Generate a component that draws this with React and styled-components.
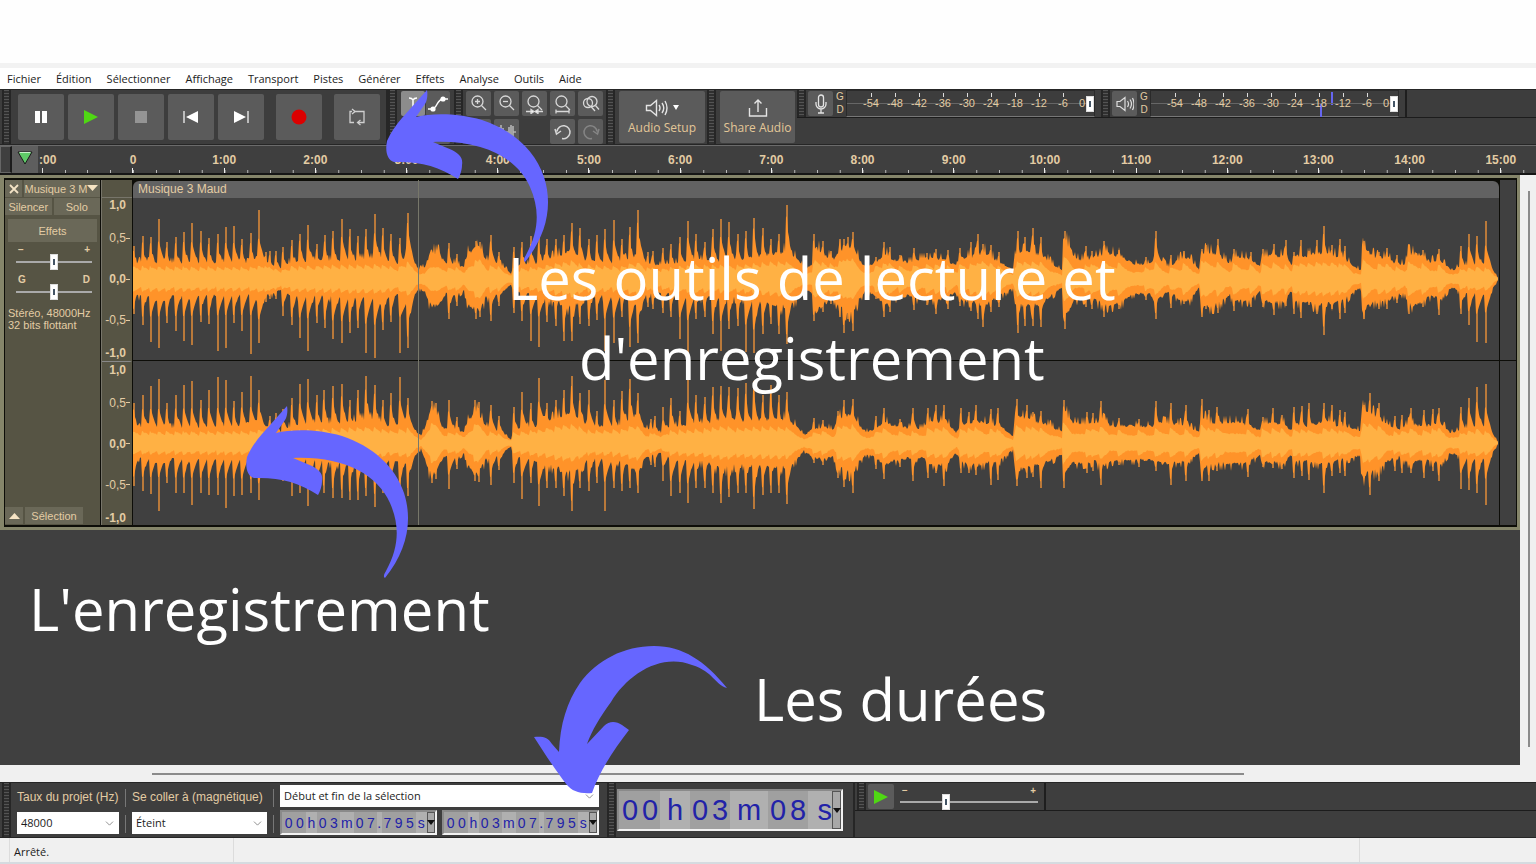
import React, { useState } from 'react';
import styled, { createGlobalStyle, css } from 'styled-components';
import { ChevronDown } from 'lucide-react';

const menus = ['Fichier', 'Édition', 'Sélectionner', 'Affichage', 'Transport', 'Pistes', 'Générer', 'Effets', 'Analyse', 'Outils', 'Aide'];
const minutes = Array.from({ length: 16 }, (_, i) => (i === 0 ? '0' : `${i}:00`));
const levels = ['-54', '-48', '-42', '-36', '-30', '-24', '-18', '-12', '-6'];
const scale = ['1,0', '0,5', '0,0', '-0,5', '-1,0'];

// peaks: x, height above the axis, height below the axis
const leftPeaks = [
    [133, 33, 35], [142, 43, 46], [150, 42, 63], [158, 60, 69], [166, 37, 44], [175, 42, 52], [183, 47, 62], [191, 56, 66],
    [200, 48, 43], [208, 41, 45], [217, 45, 72], [225, 52, 69], [233, 53, 44], [241, 40, 52], [250, 46, 75], [258, 69, 64],
    [265, 27, 23], [269, 28, 20], [275, 28, 20], [282, 32, 37], [291, 39, 46], [299, 45, 59], [307, 54, 72], [316, 35, 44],
    [324, 44, 49], [332, 48, 60], [341, 60, 64], [349, 50, 54], [357, 43, 49], [365, 50, 74], [374, 65, 79], [382, 51, 51],
    [390, 45, 43], [399, 41, 74], [407, 66, 69], [448, 36, 40], [456, 25, 27], [475, 38, 40], [479, 37, 38], [490, 44, 42],
    [498, 27, 27], [513, 32, 34], [521, 37, 42], [530, 43, 62], [538, 42, 68], [546, 40, 43], [555, 40, 47], [563, 44, 62],
    [571, 56, 62], [579, 51, 45], [588, 40, 47], [596, 44, 41], [604, 50, 72], [613, 59, 64], [621, 40, 38], [629, 52, 68],
    [637, 69, 64], [647, 27, 28], [652, 28, 30], [662, 31, 34], [670, 35, 38], [679, 42, 60], [687, 58, 75], [695, 45, 40],
    [704, 37, 38], [712, 50, 55], [720, 60, 72], [728, 57, 50], [737, 45, 47], [745, 48, 73], [753, 61, 74], [762, 51, 55],
    [770, 40, 45], [778, 45, 55], [786, 74, 65], [813, 45, 42], [822, 38, 33], [830, 28, 25], [839, 40, 38], [843, 40, 54],
    [847, 42, 40], [852, 47, 52], [875, 22, 20], [883, 37, 38], [889, 32, 33], [899, 24, 20], [913, 31, 31], [926, 26, 26],
    [935, 30, 35], [947, 29, 30], [959, 31, 27], [970, 37, 32], [977, 45, 40], [982, 35, 48], [990, 34, 33], [998, 27, 28],
    [1017, 48, 54], [1024, 42, 47], [1032, 51, 47], [1040, 42, 48], [1064, 48, 50], [1085, 33, 28], [1091, 28, 30],
    [1103, 38, 38], [1118, 29, 30], [1145, 22, 21], [1155, 48, 40], [1170, 24, 29], [1183, 28, 25], [1201, 30, 38],
    [1205, 34, 30], [1217, 40, 34], [1233, 30, 32], [1250, 27, 28], [1262, 30, 28], [1273, 35, 36], [1285, 39, 27],
    [1293, 27, 35], [1300, 39, 39], [1308, 28, 26], [1316, 39, 35], [1323, 53, 56], [1331, 34, 30], [1339, 40, 40],
    [1344, 33, 34], [1363, 38, 40], [1378, 27, 30], [1386, 31, 30], [1396, 24, 24], [1408, 35, 35], [1422, 29, 28],
    [1438, 30, 36], [1460, 33, 35], [1468, 45, 46], [1476, 43, 63], [1485, 58, 64],
];

const rightPeaks = [
    [133, 40, 43], [142, 48, 48], [150, 57, 51], [158, 64, 68], [166, 40, 40], [175, 48, 50], [183, 58, 50], [191, 62, 62],
    [200, 43, 50], [208, 53, 52], [217, 66, 52], [225, 63, 65], [233, 42, 53], [241, 51, 52], [250, 67, 50], [258, 53, 57],
    [269, 27, 24], [275, 30, 25], [282, 34, 38], [291, 45, 53], [299, 59, 50], [307, 64, 63], [316, 48, 50], [323, 53, 50],
    [332, 57, 55], [341, 59, 55], [349, 43, 57], [357, 53, 57], [365, 67, 53], [374, 58, 64], [382, 43, 50], [390, 50, 45],
    [399, 66, 53], [407, 45, 53], [431, 42, 40], [435, 40, 36], [448, 43, 46], [456, 26, 26], [474, 43, 38], [478, 41, 39],
    [490, 38, 42], [498, 27, 27], [513, 36, 40], [521, 51, 56], [530, 40, 40], [538, 65, 63], [546, 40, 45], [555, 43, 45],
    [563, 53, 53], [571, 67, 68], [579, 50, 45], [588, 53, 48], [596, 32, 40], [604, 63, 68], [613, 43, 45], [621, 52, 48],
    [629, 64, 45], [637, 50, 50], [650, 24, 22], [654, 27, 24], [662, 36, 38], [670, 45, 53], [679, 32, 50], [687, 64, 60],
    [695, 48, 45], [704, 46, 45], [712, 56, 50], [720, 57, 60], [728, 56, 54], [737, 55, 50], [745, 60, 50], [753, 62, 66],
    [762, 48, 52], [770, 58, 50], [778, 48, 50], [786, 51, 61], [813, 25, 20], [822, 23, 22], [837, 32, 35], [843, 43, 44],
    [852, 44, 50], [875, 27, 26], [883, 35, 36], [899, 24, 24], [912, 35, 38], [927, 35, 35], [935, 38, 30], [943, 38, 43],
    [960, 35, 30], [968, 31, 30], [975, 38, 32], [990, 34, 42], [997, 35, 37], [1016, 44, 43], [1026, 38, 35], [1032, 31, 34],
    [1040, 32, 45], [1063, 43, 45], [1086, 31, 30], [1092, 30, 28], [1100, 42, 42], [1118, 25, 22], [1138, 24, 24],
    [1155, 42, 28], [1170, 40, 42], [1185, 38, 38], [1201, 44, 38], [1208, 33, 38], [1216, 36, 28], [1247, 34, 34],
    [1262, 26, 24], [1272, 35, 25], [1281, 28, 26], [1293, 36, 35], [1301, 37, 33], [1308, 40, 37], [1323, 40, 50],
    [1331, 38, 33], [1339, 33, 30], [1344, 31, 33], [1363, 38, 35], [1369, 50, 52], [1378, 40, 38], [1394, 27, 28],
    [1401, 28, 30], [1410, 35, 30], [1423, 33, 35], [1432, 34, 28], [1438, 35, 38], [1460, 36, 46], [1468, 45, 47],
    [1476, 56, 50], [1485, 59, 62],
];

// body: x, half height of the dense part of the sound
const leftBody = [
    [133, 18], [250, 17], [262, 20], [281, 12], [290, 18], [340, 20], [380, 22], [398, 16], [408, 28], [417, 14], [419, 10],
    [425, 14], [431, 30], [439, 28], [446, 16], [456, 17], [464, 12], [468, 28], [480, 34], [486, 20], [498, 18], [511, 6],
    [513, 14], [540, 18], [565, 28], [573, 32], [583, 20], [620, 18], [640, 28], [647, 16], [662, 15], [690, 20], [740, 20],
    [760, 26], [786, 30], [797, 22], [805, 11], [812, 15], [815, 36], [825, 26], [834, 22], [840, 32], [853, 36], [859, 22],
    [866, 12], [872, 16], [886, 27], [895, 20], [910, 18], [920, 22], [940, 22], [957, 15], [960, 23], [970, 24], [985, 29],
    [1000, 18], [1013, 10], [1015, 29], [1040, 28], [1052, 17], [1062, 9], [1063, 42], [1068, 38], [1075, 22], [1088, 20],
    [1105, 28], [1120, 26], [1133, 16], [1150, 16], [1155, 26], [1168, 13], [1183, 24], [1190, 22], [1199, 10], [1201, 30],
    [1217, 28], [1230, 17], [1234, 25], [1250, 22], [1260, 14], [1262, 24], [1275, 26], [1285, 24], [1291, 13], [1295, 24],
    [1320, 28], [1335, 26], [1345, 22], [1354, 13], [1361, 10], [1362, 35], [1375, 24], [1388, 23], [1395, 17], [1405, 16],
    [1408, 28], [1417, 28], [1430, 19], [1440, 20], [1452, 9], [1460, 14], [1480, 17], [1490, 15], [1498, 1],
];

const rightBody = [
    [133, 16], [250, 17], [262, 20], [281, 12], [290, 18], [340, 22], [370, 26], [390, 18], [408, 22], [417, 12], [421, 6],
    [425, 18], [432, 38], [438, 26], [444, 15], [456, 15], [464, 11], [468, 24], [477, 34], [486, 18], [498, 13], [511, 4],
    [513, 14], [540, 20], [563, 30], [573, 32], [590, 17], [620, 20], [636, 30], [645, 16], [662, 10], [670, 18], [700, 20],
    [725, 28], [740, 22], [755, 26], [786, 26], [797, 18], [804, 8], [812, 15], [826, 18], [833, 14], [838, 27], [852, 32],
    [859, 20], [866, 12], [875, 15], [884, 23], [900, 17], [923, 16], [928, 22], [946, 24], [957, 10], [960, 20], [975, 24],
    [1000, 19], [1013, 7], [1015, 30], [1035, 24], [1050, 19], [1062, 12], [1063, 38], [1072, 22], [1095, 20], [1102, 26],
    [1110, 19], [1150, 18], [1160, 22], [1185, 20], [1199, 12], [1201, 31], [1210, 22], [1240, 23], [1260, 14], [1262, 21],
    [1283, 22], [1291, 13], [1294, 20], [1310, 19], [1325, 24], [1340, 18], [1360, 14], [1362, 36], [1379, 28], [1388, 19],
    [1398, 14], [1410, 22], [1422, 18], [1440, 22], [1450, 11], [1460, 14], [1478, 20], [1490, 15], [1498, 1],
];

const START = 133;
const WIDTH = 1366;

const interpolate = (points, x) => {
    const i = points.findIndex(p => p[0] >= x);
    if (i <= 0) return points[i === 0 ? 0 : points.length - 1][1];
    const [x0, y0] = points[i - 1];
    const [x1, y1] = points[i];
    return y0 + ((y1 - y0) * (x - x0)) / (x1 - x0);
};

const noise = n => {
    const v = Math.sin(n * 12.9898) * 43758.5453;
    return v - Math.floor(v);
};

const buildWave = (body, peaks, center) => {
    const edge = (side, inner) => {
        const points = [];
        for (let i = 0; i < WIDTH; i++) {
            const x = START + i;
            const last = peaks.filter(p => p[0] <= x).pop();
            const base = interpolate(body, x);
            const age = last ? x - last[0] : 20;
            let h;
            if (inner) {
                h = base * 0.38 + Math.min(6, base * 0.3) * Math.max(0, 1 - age / 9) + noise(x * side) * 1.5;
            } else {
                const grain = noise(x * side + 7);
                h = base * (0.84 + grain * 0.2 + (grain > 0.82 ? 0.2 : 0));
                if (last) {
                    const hit = last[side] * (age < 2 ? 0.85 : 0.64 + grain * 0.12);
                    h = Math.max(h, Math.min(base * 2.1, hit) * Math.exp(-Math.max(0, age - 1) / 8));
                }
            }
            points.push(Math.max(1, h));
        }
        return points;
    };
    const shape = (up, down) =>
        'M0 ' + center +
        up.map((h, i) => `L${i} ${(center - h).toFixed(1)}`).join('') +
        down.map((h, i) => `L${i} ${(center + h).toFixed(1)}`).reverse().join('') + 'Z';
    return {
        outer: shape(edge(1), edge(2)),
        inner: shape(edge(1, true), edge(2, true)),
        spikes: peaks.map(([x, up, down]) => `M${x - START + 1} ${center - up}V${center + down}`).join(''),
    };
};

const channels = [
    { name: 'gauche', height: 162, wave: buildWave(leftBody, leftPeaks, 81) },
    { name: 'droite', height: 164, wave: buildWave(rightBody, rightPeaks, 82) },
];

const curve = 'M41 1C42 6 41 12 39 15L30 28C46 24 72 24 96 31C126 41 149 61 158 88C167 116 161 146 139 173C137 172 138 169 140 166C153 142 154 121 144 98C131 69 97 51 47 53L66 61C75 66 77 70 76 76C76 81 74 87 72 90C53 77 32 72 8 73C1 71 -1 62 1 52C5 43 10 36 16 29Z';
const hook = 'M193 43C180 39 180 27 158 20C127 8 94 29 77 57C66 72 58 85 53 99L70 81C75 76 82 76 88 80L95 85C81 103 66 125 58 148C46 149 38 146 33 140C22 126 13 112 0 92C8 91 14 92 18 99L25 107C26 79 33 57 46 38C63 15 90 1 120 1C149 1 171 16 193 43Z';

const App = () => {
    const [pan, setPan] = useState(50);
    const [gain, setGain] = useState(50);
    const [speed, setSpeed] = useState(32);

    return (
        <Page>
            <GlobalStyle />
            <TitleArea />
            <MenuBar>
                {menus.map(m => <MenuItem key={m}>{m}</MenuItem>)}
            </MenuBar>

            <TopDock>
                <Grip $first />
                <Transport>
                    <BigButton aria-label='Pause'><svg width='14' height='14'><path d='M1 1h5v12H1zM8 1h5v12H8z' fill='#fff' /></svg></BigButton>
                    <BigButton aria-label='Lecture'><svg width='16' height='16'><path d='M1 1l14 7-14 7z' fill='#4fd813' /></svg></BigButton>
                    <BigButton aria-label='Arrêter'><svg width='14' height='14'><path d='M1 1h12v12H1z' fill='#949494' /></svg></BigButton>
                    <BigButton aria-label='Aller au début'><svg width='16' height='14'><path d='M1 1v12' stroke='#ddd' strokeWidth='1.5' /><path d='M15 1v12L3 7z' fill='#fff' /></svg></BigButton>
                    <BigButton aria-label='Aller à la fin'><svg width='16' height='14'><path d='M15 1v12' stroke='#ddd' strokeWidth='1.5' /><path d='M1 1v12l12-6z' fill='#fff' /></svg></BigButton>
                    <BigButton $apart aria-label='Enregistrer'><svg width='16' height='16'><circle cx='8' cy='8' r='7.5' fill='#dc0000' /></svg></BigButton>
                    <BigButton $apart aria-label='Boucle'>
                        <svg width='18' height='18' fill='none' stroke='#d0d0d0' strokeWidth='1.3'>
                            <path d='M4 3.500H2V14.500H6M6 3.500H16V14.500H10' />
                            <path d='M4 1L7 3.500L4 6M12.500 12L9.500 14.500L12.500 17' />
                        </svg>
                    </BigButton>
                </Transport>
                <Grip />
                <ToolGrid $cols={2} $size={24} $gap={1} $pad={4}>
                    <SmallButton $on aria-label='Outil de sélection'><svg width='20' height='20' stroke='#fff' fill='none' strokeWidth='1.5'><path d='M6 4q3 0 4 2q1-2 4-2M10 6v9M6 17q3 0 4-2q1 2 4 2' /></svg></SmallButton>
                    <SmallButton aria-label='Outil enveloppe'><svg width='22' height='20'><path d='M1 15H5C11 14 9 6 16 5H21' stroke='#fff' strokeWidth='1.5' fill='none' /><circle cx='6' cy='15' r='2.600' fill='#fff' /><circle cx='16' cy='5' r='2.600' fill='#fff' /></svg></SmallButton>
                    <SmallButton aria-label='Outil de dessin' />
                    <SmallButton aria-label='Multi-outils' />
                </ToolGrid>
                <Grip />
                <ToolGrid $cols={5} $size={25} $gap={3} $pad={3}>
                    <SmallButton aria-label='Zoom avant'><Lens><path d='M6 8.500h5M8.500 6v5' /></Lens></SmallButton>
                    <SmallButton aria-label='Zoom arrière'><Lens><path d='M6 8.500h5' /></Lens></SmallButton>
                    <SmallButton aria-label='Zoomer sur la sélection'><Lens><path d='M1 18.500h5M12 18.500h6' /><path d='M6 16.500l3 2-3 2zM13 16.500l-3 2 3 2z' fill='#fff' /></Lens></SmallButton>
                    <SmallButton aria-label='Ajuster à la largeur'><Lens><path d='M3 18.500h13M3 16.500v4M16 16.500v4' /></Lens></SmallButton>
                    <SmallButton aria-label='Bascule de zoom'>
                        <svg width='20' height='20' fill='none' stroke='#d8d8d8' strokeWidth='1.300'>
                            <circle cx='11' cy='7.500' r='5' /><circle cx='7' cy='9' r='4.500' /><path d='M14.500 11.500L18 15.500M10 12.500L14 17' />
                        </svg>
                    </SmallButton>
                    <SmallButton aria-label='Rogner' />
                    <SmallButton aria-label='Silence'><svg width='21' height='16'><path d='M1 8h4M9 8h3M17 8h3' stroke='#ddd' /><path d='M3 3v10M5 1v14M7 4v8M13 3v10M15 1v14M17 2v12' stroke='#bbb' strokeWidth='1.500' /></svg></SmallButton>
                    <Blank />
                    <SmallButton aria-label='Annuler'><Undo /></SmallButton>
                    <SmallButton aria-label='Rétablir'><Undo $flip /></SmallButton>
                </ToolGrid>
                <Grip />
                <LabelButton>
                    <IconLine>
                        <svg width='23' height='20' fill='none' stroke='#e4e4e4' strokeWidth='1.400'><path d='M1.500 7.500h4l6-5v15l-6-5h-4zM14 7q2 3 0 6M17 5q3.500 5 0 10M20 3q4 7 0 14' /></svg>
                        <svg width='7' height='6'><path d='M0 0h6l-3 5z' fill='#fff' /></svg>
                    </IconLine>
                    Audio Setup
                </LabelButton>
                <Grip />
                <LabelButton $narrow>
                    <IconLine><svg width='20' height='20' fill='none' stroke='#e4e4e4' strokeWidth='1.400'><path d='M1.500 10v8h17v-8M10 14V2M6.500 5.500L10 2l3.500 3.500' /></svg></IconLine>
                    Share Audio
                </LabelButton>
                <MeterDock>
                    <Meter label='Niveau d’enregistrement' icon={<svg width='16' height='20' fill='none' stroke='#e4e4e4' strokeWidth='1.300'><rect x='5.500' y='1' width='5' height='12' rx='2.500' /><path d='M3 8v2a5 5 0 0 0 10 0V8M8 15.500V19M5 19h6' /></svg>} />
                    <Meter marks label='Niveau de lecture' icon={<svg width='18' height='18' fill='none' stroke='#ddd' strokeWidth='1.200'><path d='M1 6.500h3l5-4v13l-5-4H1zM11.500 6q2 3 0 6M14 4.500q3 4.500 0 9M16.500 3q3 6 0 12' /></svg>} />
                    <MeterEnd />
                </MeterDock>
            </TopDock>

            <Timeline>
                <TimelineStart />
                <PinButton aria-label='Tête de lecture épinglée'><svg width='16' height='14'><path d='M1 1h14L8 13z' fill='#5fca68' stroke='#1a1a1a' /><path d='M2.500 1.500h11' stroke='#c6f0c8' /></svg></PinButton>
                <HalfMinute>:00</HalfMinute>
                {minutes.map(m => <Minute key={m}>{m}</Minute>)}
            </Timeline>

            <Workspace>
                <Tracks>
                    <Track>
                        <Controls>
                            <Row>
                                <PanelButton $w='17px' aria-label='Fermer la piste'><svg width='10' height='10'><path d='M1 1l8 8M9 1l-8 8' stroke='#f3e3c6' strokeWidth='1.800' /></svg></PanelButton>
                                <PanelButton $grow>Musique 3 M<svg width='12' height='7'><path d='M0 0h11l-5.500 6z' fill='#f6e4c4' /></svg></PanelButton>
                            </Row>
                            <Row>
                                <PanelButton $grow>Silencer</PanelButton>
                                <PanelButton $grow>Solo</PanelButton>
                            </Row>
                            <EffectsButton>Effets</EffectsButton>
                            <Knob>
                                <Ends><b>−</b><b>+</b></Ends>
                                <Range aria-label='Gain' value={gain} onChange={e => setGain(e.target.value)} />
                            </Knob>
                            <Knob>
                                <Ends><b>G</b><b>D</b></Ends>
                                <Range aria-label='Panoramique' value={pan} onChange={e => setPan(e.target.value)} />
                            </Knob>
                            <Info>Stéréo, 48000Hz<br />32 bits flottant</Info>
                            <Row $bottom>
                                <PanelButton $w='18px' aria-label='Réduire'><svg width='11' height='6'><path d='M5.500 0L11 6H0z' fill='#f6e4c4' /></svg></PanelButton>
                                <PanelButton $w='58px'>Sélection</PanelButton>
                            </Row>
                        </Controls>
                        <Rulers>
                            <RulerHead />
                            {channels.map(c => (
                                <Ruler key={c.name} $h={c.height}>
                                    {scale.map((s, i) => <Level key={s} $bold={i % 2 === 0} $edge={i % 4 === 0}>{s}</Level>)}
                                </Ruler>
                            ))}
                        </Rulers>
                        <Clip>
                            <ClipTitle>Musique 3 Maud</ClipTitle>
                            {channels.map(c => (
                                <Channel key={c.name} $h={c.height}>
                                    <Wave viewBox={`0 0 ${WIDTH} ${c.height}`} preserveAspectRatio='none' role='img' aria-label={`Canal ${c.name}`}>
                                        <path d={c.wave.spikes} stroke='#b9793a' strokeWidth='2' />
                                        <path d={c.wave.outer} fill='#ff9329' />
                                        <path d={c.wave.inner} fill='#ffb144' />
                                    </Wave>
                                </Channel>
                            ))}
                            <Playhead />
                        </Clip>
                        <AfterClip><i /><i /></AfterClip>
                    </Track>
                </Tracks>
                <VerticalBar><VerticalThumb /></VerticalBar>
            </Workspace>

            <HorizontalBar><HorizontalThumb /></HorizontalBar>

            <BottomDock>
                <Grip $first />
                <Field $w={102}>
                    <label htmlFor='rate'>Taux du projet (Hz)</label>
                    <Drop id='rate' value='48000' />
                </Field>
                <Split><i /><i /></Split>
                <Field $w={135}>
                    <label htmlFor='snap'>Se coller à (magnétique)</label>
                    <Drop id='snap' value='Éteint' />
                </Field>
                <Split><i /><i /></Split>
                <Selection>
                    <Drop aria-label='Sélection' value='Début et fin de la sélection' />
                    <Times>
                        <Time text='00h03m07.795s' label='Début' />
                        <Time text='00h03m07.795s' label='Fin' />
                    </Times>
                </Selection>
                <Grip />
                <TimeDock><Time big text='00h03m08s' label='Position' /></TimeDock>
                <SpeedDock>
                    <SpeedBar>
                        <Grip />
                        <PlayButton aria-label='Lecture à vitesse variable'><svg width='16' height='16'><path d='M1 1l14 7-14 7z' fill='#4fd813' /></svg></PlayButton>
                        <Speed>
                            <Ends><b>−</b><b>+</b></Ends>
                            <Range aria-label='Vitesse de lecture' value={speed} onChange={e => setSpeed(e.target.value)} />
                        </Speed>
                    </SpeedBar>
                </SpeedDock>
            </BottomDock>

            <StatusBar>
                <Status $w='224px'>Arrêté.</Status>
                <Status $grow />
                <Status $w='177px' />
            </StatusBar>

            <Note $x={386} $y={89} width='164' height='175'><path d={curve} /></Note>
            <Note $x={246} $y={405} width='164' height='175'><path d={curve} /></Note>
            <Note $x={534} $y={645} width='195' height='150'><path d={hook} /></Note>
            <Caption $x={508} $y={238} $center>Les outils de lecture et<br />d'enregistrement</Caption>
            <Caption $x={29} $y={569}>L'enregistrement</Caption>
            <Caption $x={754} $y={659}>Les durées</Caption>
        </Page>
    );
};

const Lens = ({ children }) => (
    <svg width='20' height='21' fill='none' stroke='#d8d8d8' strokeWidth='1.300'>
        <circle cx='8.500' cy='8.500' r='5.500' /><path d='M12.500 12.500L17 17' />{children}
    </svg>
);

const Undo = ({ $flip }) => (
    <svg width='18' height='18' fill='none' stroke={$flip ? '#858585' : '#d8d8d8'} strokeWidth='1.500'>
        {$flip
            ? <path d='M10 15.500A6.500 6.500 0 1 1 15 8.500M11 8l4.500 3 1.500-5' />
            : <path d='M8 15.500A6.500 6.500 0 1 0 3 8.500M1 6l1.500 5L7 8' />}
    </svg>
);

const Meter = ({ icon, label, marks }) => {
    const [volume, setVolume] = useState(100);
    return (
        <MeterGroup>
            <Grip />
            <MeterButton aria-label={label}>{icon}</MeterButton>
            <Sides><span>G</span><span>D</span></Sides>
            <Scale>
                {levels.map(l => <ScaleMark key={l}>{l}</ScaleMark>)}
                <ScaleZero>0</ScaleZero>
                {marks && <><Peak $x={180} $top /><Peak $x={169} /></>}
                <MeterRange aria-label={`${label}, volume`} value={volume} onChange={e => setVolume(e.target.value)} />
            </Scale>
        </MeterGroup>
    );
};

const Drop = ({ value, ...rest }) => (
    <DropBox>
        <select defaultValue={value} {...rest}><option>{value}</option></select>
        <ChevronDown size={13} color='#777' strokeWidth={1.5} />
    </DropBox>
);

const Time = ({ text, big, label }) => (
    <TimeBox $big={big} role='group' aria-label={label}>
        {text.split('').map((c, i) => <Digit key={i} $big={big} $char={c}>{c}</Digit>)}
        <TimeButton $big={big} aria-label={`${label}, format`}><svg width='8' height='5'><path d='M0 0h8L4 5z' fill='#111' /></svg></TimeButton>
    </TimeBox>
);

const GlobalStyle = createGlobalStyle`
    * { box-sizing: border-box; }
    body { margin: 0; background: #fefefe; }
    button, select { font: inherit; color: inherit; border: 0; padding: 0; }
    button { display: flex; align-items: center; justify-content: center; }
    svg { display: block; flex: none; }
`;

const Page = styled.main`
    position: relative;
    display: flex;
    flex-direction: column;
    min-height: 100vh;
    overflow: hidden;
    font: 12px/14px 'Open Sans', 'Noto Sans', sans-serif;
    color: #e3cca4;
`;

const TitleArea = styled.header`
    height: 68px;
    background: #fefefe;
    border-bottom: 5px solid #f2f2f2;
`;

const MenuBar = styled.nav`
    display: flex;
    gap: 15px;
    height: 21px;
    padding-left: 7px;
    background: #fff;
`;

const MenuItem = styled.button`
    background: none;
    color: #1c1c1c;
    font-size: 11px;
`;

const TopDock = styled.section`
    display: flex;
    height: 56px;
    background: #3d3d3d;
    border-top: 1px solid #262626;
    border-bottom: 1px solid #262626;
`;

const Grip = styled.div`
    flex: none;
    width: 9px;
    margin-left: ${p => (p.$first ? 2 : 0)}px;
    border: 1px solid #262626;
    border-width: 0 2px;
    background: repeating-linear-gradient(#545454 0 1px, #303030 1px 3px);
`;

const raised = css`
    background: #5b5b5b;
    border-radius: 2px;
`;

const Transport = styled.div`
    display: flex;
    gap: 4px;
    padding: 4px 6px 4px 7px;
    border-right: 2px solid #262626;
`;

const BigButton = styled.button`
    ${raised}
    width: 46px;
    margin-left: ${p => (p.$apart ? 8 : 0)}px;
`;

const ToolGrid = styled.div`
    display: grid;
    grid-template-columns: repeat(${p => p.$cols}, ${p => p.$size}px);
    grid-auto-rows: 25px;
    gap: 3px ${p => p.$gap}px;
    padding: 1px ${p => p.$pad}px;
`;

const SmallButton = styled.button`
    ${raised}
    background: ${p => (p.$on ? '#8c8c8c' : '#5b5b5b')};
`;

const Blank = styled.span``;

const LabelButton = styled.button`
    ${raised}
    flex-direction: column;
    gap: 2px;
    width: ${p => (p.$narrow ? 75 : 86)}px;
    margin: 1px 2px 1px 4px;
    padding-bottom: 2px;
    color: #e3c798;
    white-space: nowrap;
`;

const IconLine = styled.span`
    display: flex;
    align-items: center;
    gap: 5px;
    height: 22px;
`;

const MeterDock = styled.div`
    flex: 1;
    display: flex;
    height: 28px;
    border-bottom: 1px solid #1c1c1c;
`;

const MeterGroup = styled.div`
    display: flex;
    width: 304px;
    font-family: 'Liberation Sans', Arial, sans-serif;
    font-size: 11px;
`;

const MeterButton = styled.button`
    ${raised}
    width: 25px;
    margin: 1px 2px;
`;

const Sides = styled.div`
    display: flex;
    flex-direction: column;
    width: 10px;
    font-size: 10px;
    line-height: 13px;
    text-align: center;
`;

const Scale = styled.div`
    position: relative;
    display: flex;
    width: 249px;
    margin-left: 1px;
    padding-left: 12px;
    border: 1px solid #2a2a2a;
    border-bottom-color: #777;
`;

const ScaleMark = styled.span`
    z-index: 1;
    width: 24px;
    padding-top: 5px;
    text-align: center;
    background: linear-gradient(#ddd, #ddd) 50% 2px / 1px 4px no-repeat;
`;

const ScaleZero = styled(ScaleMark)`
    width: 10px;
    text-align: right;
    background: none;
`;

const Peak = styled.i`
    position: absolute;
    left: ${p => p.$x}px;
    top: ${p => (p.$top ? 1 : 13)}px;
    width: 2px;
    height: 13px;
    background: #6666f0;
`;

const Range = styled.input.attrs({ type: 'range', min: 0, max: 100 })`
    appearance: none;
    display: block;
    width: 100%;
    height: 17px;
    margin: 0;
    background: linear-gradient(#aaa, #aaa) 0 8px / 100% 2px no-repeat;

    &::-webkit-slider-thumb {
        appearance: none;
        width: 8px;
        height: 16px;
        border: 1px solid #ddd;
        background: linear-gradient(#456, #456) 50% 50% / 2px 6px no-repeat #fff;
    }
`;

const MeterRange = styled(Range)`
    position: absolute;
    left: 0;
    top: 4px;
    background: linear-gradient(#666, #666) 0 8px / 100% 1px no-repeat;
`;

const MeterEnd = styled.div`
    width: 2px;
    background: #1e1e1e;
`;

const Timeline = styled.section`
    --minute: calc((100vw - 168px) / 15);
    display: flex;
    height: 30px;
    overflow: hidden;
    background: #3f3f3f;
    border-top: 1px solid #6b6b6b;
    border-bottom: 2px solid #161616;
    font: bold 12px/28px 'Liberation Sans', Arial, sans-serif;
`;

const TimelineStart = styled.div`
    flex: none;
    width: 12px;
    border: 1px solid #666;
    border-right: 2px solid #1c1c1c;
`;

const PinButton = styled.button`
    flex: none;
    width: 26px;
    background: #5e5e5e;
    padding-bottom: 3px;
`;

const HalfMinute = styled.span`
    flex: none;
    width: calc(95px - var(--minute) / 2);
    padding-left: 1px;
    background: linear-gradient(#ddd, #ddd) 4px 100% / 1px 5px no-repeat, linear-gradient(#bbb, #bbb) 27px 100% / 1px 3px no-repeat;
`;

const Minute = styled.span`
    flex: none;
    width: var(--minute);
    text-align: center;
    background: linear-gradient(#eee, #eee) 50% 100% / 1px 5px no-repeat, linear-gradient(90deg, #bbb 1px, transparent 1px) 0 100% / 25% 3px repeat-x;
`;

const Workspace = styled.section`
    flex: 1;
    display: flex;
    background: #404040;
`;

const Tracks = styled.div`
    flex: 1;
    min-width: 0;
`;

const Track = styled.article`
    display: flex;
    padding: 2px 1px;
    border: 3px solid #85856a;
    border-left-width: 4px;
    background: #0d0d08;
    font-family: 'Liberation Sans', Arial, sans-serif;
`;

const Controls = styled.div`
    display: flex;
    flex-direction: column;
    width: 95px;
    background: #565444;
`;

const Row = styled.div`
    display: flex;
    gap: 2px;
    height: 18px;
    padding-bottom: 1px;
    margin-top: ${p => (p.$bottom ? 'auto' : 0)};
`;

const PanelButton = styled.button`
    flex: ${p => (p.$grow ? 1 : 'none')};
    width: ${p => p.$w || 'auto'};
    background: #6a6858;
    font-size: 11px;
    white-space: nowrap;
`;

const EffectsButton = styled(PanelButton)`
    flex: none;
    height: 23px;
    margin: 3px;
`;

const Knob = styled.div`
    width: 76px;
    height: 30px;
    margin-left: 11px;
`;

const Ends = styled.div`
    display: flex;
    justify-content: space-between;
    height: 8px;
    padding: 0 2px;
    font-size: 10px;
    line-height: 10px;
`;

const Info = styled.p`
    margin: 2px 0 0 3px;
    font-size: 11px;
    line-height: 12px;
    white-space: nowrap;
`;

const Rulers = styled.div`
    width: 31px;
    margin-left: 1px;
    background: #565444;
    border-left: 1px solid #77756a;
`;

const RulerHead = styled.div`
    height: 18px;
    border-bottom: 1px solid #77756a;
`;

const Ruler = styled.div`
    display: grid;
    grid-template-rows: 14px 52px 30px 52px 14px;
    align-content: center;
    align-items: center;
    height: ${p => p.$h}px;
    border-right: 2px solid #565444;

    & + & { border-top: 1px solid #888; margin-top: 1px; }
`;

const Level = styled.span`
    padding-right: 4px;
    text-align: right;
    font-weight: ${p => (p.$bold ? 'bold' : 'normal')};
    background: ${p => (p.$edge ? 'none' : 'linear-gradient(#e3cca4, #e3cca4) 100% 50% / 4px 1px no-repeat')};
`;

const Clip = styled.div`
    position: relative;
    flex: 1;
    min-width: 0;
    margin-left: 1px;
`;

const ClipTitle = styled.div`
    height: 17px;
    margin-top: 1px;
    padding-left: 5px;
    border-radius: 6px 6px 0 0;
    background: #626262;
    line-height: 16px;
`;

const Channel = styled.div`
    height: ${p => p.$h}px;
    background: #404040;

    & + & { margin-top: 1px; }
`;

const Wave = styled.svg`
    width: 100%;
    height: 100%;
`;

const Playhead = styled.div`
    position: absolute;
    top: 0;
    bottom: 0;
    left: 20.9%;
    width: 1px;
    background: #77776a;
`;

const AfterClip = styled.div`
    display: grid;
    grid-template-rows: 180px 164px;
    gap: 1px;
    width: 16px;
    margin-left: 1px;

    i { background: #404040; }
`;

const VerticalBar = styled.div`
    width: 16px;
    padding: 16px 6px 18px 8px;
    background: #f0f0f0;
`;

const VerticalThumb = styled.div`
    height: 100%;
    background: #8b8b8b;
`;

const HorizontalBar = styled.div`
    height: 17px;
    padding: 8px 19% 7px 152px;
    background: #f0f0f0;
`;

const HorizontalThumb = styled.div`
    height: 2px;
    background: #8b8b8b;
`;

const BottomDock = styled.section`
    display: flex;
    height: 56px;
    background: #3e3e3e;
    border-top: 1px solid #262626;
    border-bottom: 1px solid #262626;
`;

const Field = styled.div`
    display: flex;
    flex-direction: column;
    justify-content: space-between;
    width: ${p => p.$w}px;
    padding: 7px 0 3px;
    margin-left: 6px;
    white-space: nowrap;

    label { font: 12px/14px 'Liberation Sans', Arial, sans-serif; }
`;

const Split = styled.div`
    display: flex;
    flex-direction: column;
    justify-content: space-between;
    width: 1px;
    margin-left: 6px;
    padding: 6px 0 4px;

    i { height: 18px; background: #777; }
`;

const DropBox = styled.div`
    position: relative;
    height: 22px;
    background: #fff;
    color: #1c1c1c;

    select {
        appearance: none;
        width: 100%;
        height: 100%;
        padding: 0 18px 1px 4px;
        background: none;
        font-size: 11px;
    }

    svg {
        position: absolute;
        right: 3px;
        top: 5px;
        pointer-events: none;
    }
`;

const Selection = styled.div`
    display: flex;
    flex-direction: column;
    justify-content: space-between;
    width: 319px;
    margin: 2px 8px 2px 6px;
`;

const Times = styled.div`
    display: grid;
    grid-template-columns: 1fr 1fr;
    gap: 5px;
`;

const TimeBox = styled.div`
    display: flex;
    width: 100%;
    height: ${p => (p.$big ? 42 : 25)}px;
    padding-left: 1px;
    border: 2px solid #f2f2f2;
    border-top-color: #8a8a8a;
    border-left-color: #8a8a8a;
    background: #a0a0a0;
    color: #2222a8;
    font: ${p => (p.$big ? 29 : 14)}px 'Liberation Sans', Arial, sans-serif;
`;

const share = { h: 15, m: 19, s: 12, '.': 6 };

const Digit = styled.span`
    display: flex;
    flex: ${p => (p.$big ? share[p.$char] || 10 : p.$char === '.' ? 5 : p.$char === 'm' ? 14 : 11)} 1 0;
    min-width: 0;
    align-items: center;
    justify-content: ${p => (p.$big && p.$char === 's' ? 'flex-end' : 'center')};
    background: ${p => (/\d/.test(p.$char) ? '#a0a0a0' : '#b0b0b0')};
`;

const TimeButton = styled.button`
    width: ${p => (p.$big ? 9 : 8)}px;
    border: 1px solid #555;
    background: #a8a8a8;
`;

const TimeDock = styled.div`
    display: flex;
    align-items: center;
    width: 239px;
    padding: 0 10px 0 1px;
    border-right: 2px solid #262626;
`;

const SpeedDock = styled.div`
    flex: 1;
`;

const SpeedBar = styled.div`
    display: flex;
    height: 28px;
    padding-left: 2px;
    border-bottom: 1px solid #1c1c1c;
`;

const PlayButton = styled.button`
    ${raised}
    width: 26px;
    margin: 1px 2px;
`;

const Speed = styled.div`
    width: 150px;
    padding: 2px 6px 0 4px;
    border-right: 2px solid #1e1e1e;
`;

const StatusBar = styled.footer`
    display: flex;
    height: 26px;
    padding-left: 9px;
    background: #f0f0f0;
    border-bottom: 2px solid #d5dbe0;
    color: #1c1c1c;
    font-size: 11px;
`;

const Status = styled.div`
    flex: ${p => (p.$grow ? 1 : 'none')};
    width: ${p => p.$w || 'auto'};
    padding: 7px 4px;
    border-left: 1px solid #dcdcdc;
`;

const Note = styled.svg`
    position: absolute;
    left: ${p => p.$x}px;
    top: ${p => p.$y}px;
    fill: #6666ff;
`;

const Caption = styled.p`
    position: absolute;
    left: ${p => p.$x}px;
    top: ${p => p.$y}px;
    margin: 0;
    color: #fff;
    font-size: 58px;
    line-height: 80px;
    text-align: ${p => (p.$center ? 'center' : 'left')};
    white-space: nowrap;
`;

export default App;
